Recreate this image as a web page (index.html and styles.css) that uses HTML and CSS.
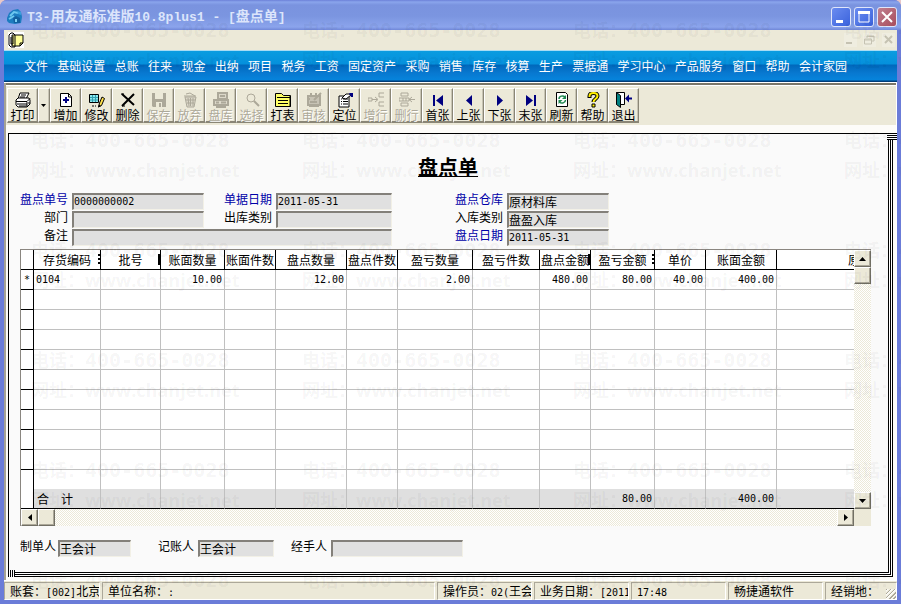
FILE: index.html
```
<!DOCTYPE html>
<html lang="zh-CN">
<head>
  <meta charset="UTF-8" />
  <meta name="viewport" content="width=device-width, initial-scale=1.0" />
  <title>T3-用友通标准版10.8plus1 - [盘点单]</title>
  <link rel="stylesheet" href="styles.css">
</head>
<body>
  <div class="window">
    <header class="titlebar">
      <svg class="app-icon" viewBox="0 0 17 17"><path d="M1 10l2-5 4-3 5-1 3 3 1 5-1 6-6 1-6-1-2-2z" fill="#1c7cc0"/><path d="M4 8l4-4 4 1M3 11l5-3" fill="none" stroke="#6cc8f0" stroke-width="2"/><path d="M11 3l4 1v3l-3-1z" fill="#3aa0dc"/><path d="M7 10l3-2 4 2v5H8z" fill="#1260a0"/><path d="M9 11h2v3H9z" fill="#7cd0f4"/></svg>
      <h1><span>T3-</span>用友通标准版<span>10.8plus1 - [</span>盘点单<span>]</span></h1>
      <div class="win-btns">
        <button class="win-btn" aria-label="最小化"><svg viewBox="0 0 18 18"><path d="M4 12h7v3H4z" fill="#fff"/></svg></button>
        <button class="win-btn" aria-label="最大化"><svg viewBox="0 0 18 18"><path d="M4 5h10v9H4z" fill="none" stroke="#fff"/><path d="M3 3h12v3H3z" fill="#fff"/></svg></button>
        <button class="win-btn close" aria-label="关闭"><svg viewBox="0 0 18 18"><path d="M4 4l10 10M14 4L4 14" stroke="#fff" stroke-width="2"/></svg></button>
      </div>
    </header>

    <div class="docbar">
      <svg class="doc-icon" viewBox="0 0 16 16"><path d="M0 0h16v16H0z" fill="#fff"/><path d="M4 3h11v8l-3 3H4z" fill="#ffff99" stroke="#000"/><path d="M15 11h-3v3" fill="none" stroke="#000"/><path d="M1 3v10l2 2h4V3L5 1H3L1 3M3 5v7h2V4" fill="none" stroke="#000"/></svg>
      <div class="doc-btns">
        <button aria-label="最小化子窗口"><svg viewBox="0 0 12 12"><path d="M2 8h6v2H2z" fill="#c5c2b2"/></svg></button>
        <button aria-label="还原子窗口"><svg viewBox="0 0 12 12"><path d="M4 4V2h7v5H9M4 2.500h7M1.500 5h7v5h-7zM1 6h8" fill="none" stroke="#c5c2b2"/></svg></button>
        <button aria-label="关闭子窗口"><svg viewBox="0 0 12 12"><path d="M3 2l7 7M10 2L3 9" stroke="#c5c2b2" stroke-width="2"/></svg></button>
      </div>
    </div>

    <nav class="menubar">
      <div class="menu">
        <a href="#">文件</a>
        <a href="#">基础设置</a>
        <a href="#">总账</a>
        <a href="#">往来</a>
        <a href="#">现金</a>
        <a href="#">出纳</a>
        <a href="#">项目</a>
        <a href="#">税务</a>
        <a href="#">工资</a>
        <a href="#">固定资产</a>
        <a href="#">采购</a>
        <a href="#">销售</a>
        <a href="#">库存</a>
        <a href="#">核算</a>
        <a href="#">生产</a>
        <a href="#">票据通</a>
        <a href="#">学习中心</a>
        <a href="#">产品服务</a>
        <a href="#">窗口</a>
        <a href="#">帮助</a>
        <a href="#">会计家园</a>
      </div>
    </nav>

    <main class="client">
      <div class="toolbar">
        <button><svg viewBox="0 0 16 16"><path d="M5 1h9l-3 6H3z" fill="#fff" stroke="#000"/><path d="M6 3h5M5 5h5" stroke="#000"/><path d="M1 8l2-2h11l1 2v4l-3 3H3l-2-2z" fill="#fff" stroke="#000"/><path d="M1 9.500h11l3-3M2 12h10M12 10v4M4 14h8M13 11h2" fill="none" stroke="#000"/></svg>打印</button>
        <button class="drop" aria-label="打印选项"><svg viewBox="0 0 6 4"><path d="M0 0h5L2.500 3z"/></svg></button>
        <button><svg viewBox="0 0 16 16"><path d="M2.500 1.500h8l3 3v10h-11z" fill="#fff" stroke="#000"/><path d="M10.500 1v4h3" fill="none" stroke="#000"/><path d="M8 5v6M5 8h6" stroke="#000080" stroke-width="2"/></svg>增加</button>
        <button><svg viewBox="0 0 16 16"><path d="M.5 2.500h9v8h-9z" fill="#8fe8ee" stroke="#000"/><path d="M1 5.500h8M1 8h8M3.500 3v7M6.500 3v7" stroke="#30a0b0"/><path d="M13 5l2.500 1.500-3 7-3 1.500 1-4z" fill="#ffe14a" stroke="#000"/><path d="M9 15.500l1-3 2 1.500z"/><path d="M3 14h2M6 14h1" stroke="#000"/></svg>修改</button>
        <button><svg viewBox="0 0 16 16"><path d="M2 2l12 11M14 2L2 14" stroke="#000" stroke-width="2"/><path d="M1 2h3M2 14h3" stroke="#000"/></svg>删除</button>
        <button disabled><svg viewBox="0 0 16 16"><path d="M1 1h14v14H2l-1-1z" fill="#aca899"/><path d="M4 1h8v6H4zM5 10h6v5H5z" fill="#ece9d8"/><path d="M8 11h2v4H8z" fill="#aca899"/></svg>保存</button>
        <button disabled><svg viewBox="0 0 16 16"><path d="M3 5h11l-2 10H5z" fill="#dcd8c9" stroke="#aca899"/><path d="M2 4h12M4 2l4-1 5 3M6 6l1 8M8.500 6v8M11 6v8M4 8h9M5 11h7" fill="none" stroke="#aca899"/></svg>放弃</button>
        <button disabled><svg viewBox="0 0 16 16"><path d="M5 1h9v6H5zM1 8h14v5H1z" fill="#dcd8c9" stroke="#aca899" stroke-width="2"/><path d="M7 4h5M3 10.500h3M8 10.500h5M3 15h10" stroke="#aca899" stroke-width="2"/></svg>盘库</button>
        <button disabled><svg viewBox="0 0 16 16"><circle cx="7" cy="6" r="4" fill="none" stroke="#aca899"/><path d="M10 9l5 5" stroke="#aca899" stroke-width="2"/></svg>选择</button>
        <button><svg viewBox="0 0 16 16"><path d="M.5 14.500v-13h6l2 2h7v11z" fill="#ffff66" stroke="#000"/><path d="M2 5.500h13M3 8.500h10M3 11.500h10M15 4v11" stroke="#000"/></svg>打表</button>
        <button disabled><svg viewBox="0 0 16 16"><path d="M2 4h12v9H2z" fill="#c7c3b5" stroke="#aca899" stroke-width="2"/><path d="M8 8l7-7M5 1v4M10 1v4M1 7h3M4 10h7M3 14h10" stroke="#aca899" stroke-width="2"/></svg>审核</button>
        <button><svg viewBox="0 0 16 16"><path d="M2 4h10v11H2z" fill="#fff" stroke="#000"/><path d="M4 7h1M6 7h5M4 9.500h1M6 9.500h5M4 12h1M6 12h5" stroke="#000"/><path d="M5 6l4-4h3l2 1-5 4z" fill="#fff" stroke="#000"/><path d="M12 1h4v4h-2z" fill="#000080"/></svg>定位</button>
        <button disabled><svg viewBox="0 0 16 16"><path d="M0 6h4v3H0zM4 7.500h5M7 5l3 2.500L7 10M16 1h-5v4h5M16 14h-5v-4h5" fill="none" stroke="#aca899"/></svg>增行</button>
        <button disabled><svg viewBox="0 0 16 16"><path d="M2 1h7v3H2zM2 11h7v3H2zM0 6h10v3H0zM10 7.500h6M13 5l-3 2.500 3 2.500M4 6v3M7 6v3" fill="none" stroke="#aca899"/></svg>删行</button>
        <button><svg viewBox="0 0 16 16"><path d="M3 3h2v11H3zM13 3v11L6 8.500z" fill="#000080"/></svg>首张</button>
        <button><svg viewBox="0 0 16 16"><path d="M11 3v11L5 8.500z" fill="#000080"/></svg>上张</button>
        <button><svg viewBox="0 0 16 16"><path d="M5 3v11l6-5.500z" fill="#000080"/></svg>下张</button>
        <button><svg viewBox="0 0 16 16"><path d="M3 3v11l7-5.500zM11 3h2v11h-2z" fill="#000080"/></svg>末张</button>
        <button><svg viewBox="0 0 16 16"><path d="M2.500.5h9l2 2v12h-11z" fill="#fff" stroke="#000"/><path d="M5 7c0-3 4-4 6-2M11.500 8c0 3-4 4-6 2" fill="none" stroke="#208850" stroke-width="1.500"/><path d="M12 3v4H8zM4.500 12V8h4z" fill="#208850"/></svg>刷新</button>
        <button><svg viewBox="0 0 16 16"><path d="M4.500 6V4c0-4 8-4 8 0 0 3-4 3-4 6" fill="none" stroke="#000" stroke-width="4"/><path d="M4.500 5V4c0-4 8-4 8 0 0 3-4 3-4 6" fill="none" stroke="#ffee00" stroke-width="2"/><path d="M7 12h3v3H7z" fill="#ffee00" stroke="#000"/></svg>帮助</button>
        <button><svg viewBox="0 0 16 16"><path d="M.5 12.500V.5h8v12H5" fill="#fff" stroke="#000"/><path d="M.5.5l4 3v12l-4-3z" fill="#008080" stroke="#000"/><path d="M9 6.500l4-4v3h3v2h-3v3z" fill="#000080"/></svg>退出</button>
      </div>

      <form class="sheet">
        <h2><span>盘点单</span></h2>

        <div class="fields">
          <label class="key" for="no">盘点单号</label>
          <input class="num" id="no" value="0000000002">
          <label class="key" for="date">单据日期</label>
          <input class="num" id="date" value="2011-05-31">
          <label class="key" for="store">盘点仓库</label>
          <input id="store" value="原材料库">
          <label for="dept">部门</label>
          <input id="dept">
          <label for="out-type">出库类别</label>
          <input id="out-type">
          <label for="in-type">入库类别</label>
          <input id="in-type" value="盘盈入库">
          <label for="memo">备注</label>
          <input class="memo" id="memo">
          <label class="key" for="count-date">盘点日期</label>
          <input class="num" id="count-date" value="2011-05-31">
        </div>

        <div class="grid-box">
          <table>
            <colgroup>
              <col class="w-mark"><col class="w-code"><col class="w-batch"><col class="w-amt"><col class="w-pcs"><col class="w-qty"><col class="w-pcs"><col class="w-wide"><col class="w-code"><col class="w-pcs"><col class="w-amt"><col class="w-pcs"><col class="w-qty"><col>
            </colgroup>
            <thead>
              <tr><th></th><th class="cut dots">存货编码</th><th class="cut">批号</th><th>账面数量</th><th>账面件数</th><th>盘点数量</th><th>盘点件数</th><th>盈亏数量</th><th>盈亏件数</th><th class="cut">盘点金额</th><th class="cut dots">盈亏金额</th><th>单价</th><th>账面金额</th><th class="last">原</th></tr>
            </thead>
            <tbody>
              <tr><td>*</td><td class="code">0104</td><td></td><td>10.00</td><td></td><td>12.00</td><td></td><td>2.00</td><td></td><td>480.00</td><td>80.00</td><td>40.00</td><td>400.00</td><td></td></tr>
              <tr><td></td><td></td><td></td><td></td><td></td><td></td><td></td><td></td><td></td><td></td><td></td><td></td><td></td><td></td></tr>
              <tr><td></td><td></td><td></td><td></td><td></td><td></td><td></td><td></td><td></td><td></td><td></td><td></td><td></td><td></td></tr>
              <tr><td></td><td></td><td></td><td></td><td></td><td></td><td></td><td></td><td></td><td></td><td></td><td></td><td></td><td></td></tr>
              <tr><td></td><td></td><td></td><td></td><td></td><td></td><td></td><td></td><td></td><td></td><td></td><td></td><td></td><td></td></tr>
              <tr><td></td><td></td><td></td><td></td><td></td><td></td><td></td><td></td><td></td><td></td><td></td><td></td><td></td><td></td></tr>
              <tr><td></td><td></td><td></td><td></td><td></td><td></td><td></td><td></td><td></td><td></td><td></td><td></td><td></td><td></td></tr>
              <tr><td></td><td></td><td></td><td></td><td></td><td></td><td></td><td></td><td></td><td></td><td></td><td></td><td></td><td></td></tr>
              <tr><td></td><td></td><td></td><td></td><td></td><td></td><td></td><td></td><td></td><td></td><td></td><td></td><td></td><td></td></tr>
              <tr><td></td><td></td><td></td><td></td><td></td><td></td><td></td><td></td><td></td><td></td><td></td><td></td><td></td><td></td></tr>
              <tr class="part"><td></td><td></td><td></td><td></td><td></td><td></td><td></td><td></td><td></td><td></td><td></td><td></td><td></td><td></td></tr>
            </tbody>
            <tfoot>
              <tr><td></td><td class="sum">合　计</td><td></td><td></td><td></td><td></td><td></td><td></td><td></td><td></td><td>80.00</td><td></td><td>400.00</td><td></td></tr>
            </tfoot>
          </table>
          <div class="vscroll">
            <button type="button" aria-label="向上"><svg viewBox="0 0 7 4"><path d="M0 4h7L3.500 0z"/></svg></button>
            <span class="thumb"></span>
            <button type="button" class="end" aria-label="向下"><svg viewBox="0 0 7 4"><path d="M0 0h7L3.500 4z"/></svg></button>
          </div>
          <div class="hscroll">
            <button type="button" aria-label="向左"><svg viewBox="0 0 4 7"><path d="M4 0v7L0 3.500z"/></svg></button>
            <span class="thumb"></span>
            <button type="button" class="end" aria-label="向右"><svg viewBox="0 0 4 7"><path d="M0 0v7l4-3.500z"/></svg></button>
          </div>
          <div class="corner"></div>
        </div>

        <div class="signers">
          <label for="maker">制单人</label>
          <input id="maker" value="王会计">
          <label for="booker">记账人</label>
          <input id="booker" value="王会计">
          <label for="handler">经手人</label>
          <input id="handler">
        </div>
      </form>
    </main>

    <footer class="statusbar">
      <div>账套：<span>[002]</span>北京</div>
      <div>单位名称：<span>:</span></div>
      <div>操作员：<span>02(</span>王会</div>
      <div>业务日期：<span>[2011</span></div>
      <div><span>17:48</span></div>
      <div>畅捷通软件</div>
      <div class="grip">经销地：</div>
    </footer>

    <div class="watermark" aria-hidden="true">
      <p>电话：<b>400-665-0028</b><br>网址：<i>www.chanjet.net</i></p>
      <p>电话：<b>400-665-0028</b><br>网址：<i>www.chanjet.net</i></p>
      <p>电话：<b>400-665-0028</b><br>网址：<i>www.chanjet.net</i></p>
      <p>电话：<b>400-665-0028</b><br>网址：<i>www.chanjet.net</i></p>
      <p>电话：<b>400-665-0028</b><br>网址：<i>www.chanjet.net</i></p>
      <p>电话：<b>400-665-0028</b><br>网址：<i>www.chanjet.net</i></p>
      <p>电话：<b>400-665-0028</b><br>网址：<i>www.chanjet.net</i></p>
      <p>电话：<b>400-665-0028</b><br>网址：<i>www.chanjet.net</i></p>
      <p>电话：<b>400-665-0028</b><br>网址：<i>www.chanjet.net</i></p>
      <p>电话：<b>400-665-0028</b><br>网址：<i>www.chanjet.net</i></p>
      <p>电话：<b>400-665-0028</b><br>网址：<i>www.chanjet.net</i></p>
      <p>电话：<b>400-665-0028</b><br>网址：<i>www.chanjet.net</i></p>
      <p>电话：<b>400-665-0028</b><br>网址：<i>www.chanjet.net</i></p>
      <p>电话：<b>400-665-0028</b><br>网址：<i>www.chanjet.net</i></p>
      <p>电话：<b>400-665-0028</b><br>网址：<i>www.chanjet.net</i></p>
      <p>电话：<b>400-665-0028</b><br>网址：<i>www.chanjet.net</i></p>
      <p>电话：<b>400-665-0028</b><br>网址：<i>www.chanjet.net</i></p>
      <p>电话：<b>400-665-0028</b><br>网址：<i>www.chanjet.net</i></p>
      <p>电话：<b>400-665-0028</b><br>网址：<i>www.chanjet.net</i></p>
      <p>电话：<b>400-665-0028</b><br>网址：<i>www.chanjet.net</i></p>
      <p>电话：<b>400-665-0028</b></p>
      <p>电话：<b>400-665-0028</b></p>
      <p>电话：<b>400-665-0028</b></p>
      <p>电话：<b>400-665-0028</b></p>
    </div>
  </div>
</body>
</html>
```

FILE: styles.css
```
* {
  box-sizing: border-box;
  margin: 0;
  padding: 0;
}

body {
  font-family: "Noto Sans CJK SC", sans-serif;
  font-size: 12px;
  line-height: 16px;
  color: #000;
  background: #e8c8c8;
}

button, input {
  font: inherit;
  color: inherit;
  border: none;
  border-radius: 0;
}

svg {
  display: block;
}

.window {
  position: relative;
  display: flex;
  flex-direction: column;
  min-height: 100vh;
  padding: 0 4px 4px;
  background: #6b7cd8;
  border-radius: 7px 7px 0 0;
  overflow: hidden;
}

/* title bar */
.titlebar {
  display: flex;
  align-items: center;
  height: 30px;
  margin: 0 -4px;
  padding: 3px 4px 0 6px;
  background: linear-gradient(to bottom, #6c80d8 0, #8aa5ec 2px, #7a93df 5px, #7b95e0 16px, #8ba4ec 27px, #7087d8 30px);
}

.app-icon {
  width: 17px;
  height: 17px;
}

.titlebar h1 {
  flex: 1;
  margin-left: 4px;
  font-size: 14px;
  font-weight: bold;
  line-height: 20px;
  color: #dce5fb;
  white-space: nowrap;
}

.titlebar h1 span {
  font-family: "Liberation Mono", monospace;
  font-size: 13px;
  white-space: pre;
}

.win-btns {
  display: flex;
  gap: 3px;
}

.win-btn {
  width: 20px;
  height: 20px;
  border: 1px solid #dfe6fb;
  border-radius: 3px;
  background: linear-gradient(135deg, #6a8cf0, #3a62dc);
}

.win-btn svg {
  width: 18px;
  height: 18px;
}

.win-btn.close {
  background: linear-gradient(135deg, #c08090, #a84c5c);
}

/* document row */
.docbar {
  display: flex;
  justify-content: space-between;
  align-items: center;
  height: 20px;
  padding: 0 2px 0 4px;
  background: #ece9d8;
}

.doc-icon {
  width: 16px;
  height: 16px;
}

.doc-btns {
  display: flex;
  gap: 6px;
}

.doc-btns button {
  width: 13px;
  height: 14px;
  background: #efede0;
}

.doc-btns svg {
  width: 12px;
  height: 12px;
}

/* menu */
.menubar {
  height: 33px;
  padding: 7px 20px 0;
  border-top: 1px solid #a8dcf4;
  border-bottom: 1px solid #fff;
  background: linear-gradient(to bottom, #0a9ce0 0, #0590dc 13px, #0068bc 14px, #0878d0 22px, #0684dc 29px, #003c78 30px, #003c78 31px);
}

.menu {
  display: flex;
  justify-content: space-between;
  max-width: 823px;
}

.menu a {
  color: #fff;
  text-decoration: none;
  white-space: nowrap;
}

.client {
  flex: 1;
  display: flex;
  flex-direction: column;
  border-left: 2px solid #a5a294;
  border-right: 1px solid #fff;
  background: #fdfcf9;
}

/* toolbar */
.toolbar {
  display: flex;
  height: 42px;
  padding: 3px 0 0 1px;
  border-top: 2px solid #7a7668;
  background: #ece9d8;
  box-shadow: inset 0 1px 0 #fff;
}

.toolbar button {
  width: 31px;
  height: 35px;
  padding: 2px 0 0;
  border: 1px solid;
  border-color: #fff #8a8676 #8a8676 #fff;
  border-bottom-width: 2px;
  background: #ece9d8;
  box-shadow: inset -1px 0 0 #c8c4b4;
  line-height: 13px;
  white-space: nowrap;
}

.toolbar svg {
  width: 16px;
  height: 16px;
  margin: 0 auto;
}

.toolbar button:disabled {
  color: #aca899;
  text-shadow: 1px 1px 0 #fff;
}

.toolbar .drop {
  width: 12px;
}

.toolbar .drop svg {
  width: 6px;
  height: 4px;
}

/* sheet */
.sheet {
  position: relative;
  flex: 1;
  margin: 8px 7px 7px 2px;
  padding: 20px 17px 15px 11px;
  border: 1px solid #000;
  background: #fafafa;
  box-shadow: 1px 1px 0 #fff, 2px 2px 0 #000, 3px 3px 0 #fff, 4px 4px 0 #000;
}

/* loose line ends at two corners of the frame */
.sheet::before,
.sheet::after {
  content: "";
  position: absolute;
}

.sheet::before {
  top: -1px;
  right: -9px;
  width: 10px;
  height: 7px;
  background: repeating-linear-gradient(to bottom, #000 0, #000 1px, #fff 1px, #fff 2px);
}

.sheet::after {
  left: -1px;
  bottom: -5px;
  width: 7px;
  height: 7px;
  background: repeating-linear-gradient(to right, #000 0, #000 1px, #fff 1px, #fff 2px);
}

.sheet h2 {
  padding-left: 5px;
  font-size: 20px;
  line-height: 26px;
  text-align: center;
}

.sheet h2 span {
  display: inline-block;
  height: 23px;
  border-bottom: 1px solid #000;
}

.fields {
  display: grid;
  grid-template-columns: 52px 132px 72px 116px 115px 102px;
  grid-auto-rows: 17px;
  row-gap: 1px;
  margin-top: 13px;
}

label {
  padding-right: 4px;
  line-height: 12px;
  text-align: right;
  white-space: nowrap;
}

label.key {
  color: #0000a8;
}

.sheet input {
  width: 100%;
  min-width: 0;
  height: 17px;
  padding: 0 0 2px;
  border: 1px solid;
  border-width: 2px 1px 1px 2px;
  border-color: #83807a #f2f0e6 #f2f0e6 #83807a;
  background: #e0e0e0;
}

.sheet .num {
  font-family: "DejaVu Sans Mono", monospace;
  font-size: 10px;
}

.fields .memo {
  grid-column: span 3;
}

/* detail grid */
.grid-box {
  display: grid;
  grid-template-columns: 1fr 17px;
  grid-template-rows: auto 17px;
  margin-top: 3px;
  border-top: 1px solid #8a8680;
  border-left: 1px solid #8a8680;
}

table {
  width: 100%;
  table-layout: fixed;
  border-collapse: separate;
  border-spacing: 0;
  background: #fff;
}

.w-mark { width: 13px; }
.w-code { width: 67px; }
.w-batch { width: 60px; }
.w-amt { width: 64px; }
.w-pcs { width: 51px; }
.w-qty { width: 71px; }
.w-wide { width: 75px; }

th, td {
  height: 20px;
  overflow: hidden;
  white-space: nowrap;
}

th {
  position: relative;
  font-weight: normal;
  line-height: 18px;
  border-right: 1px solid #000;
  border-bottom: 1px solid #000;
}

td {
  padding-right: 2px;
  border-right: 1px solid #c0c0c0;
  border-bottom: 1px solid #c0c0c0;
  font-family: "DejaVu Sans Mono", monospace;
  font-size: 10px;
  line-height: 19px;
  text-align: right;
}

td:first-child {
  padding: 0;
  border-color: #000;
  text-align: center;
}

th:last-child,
td:last-child {
  border-right: none;
}

td.code {
  padding-left: 2px;
  text-align: left;
}

th.last {
  padding-left: 71px;
  text-align: left;
}

/* sliver of the column title that does not fit */
th.cut::after {
  content: "";
  position: absolute;
  right: 0;
  top: 4px;
  width: 2px;
  height: 11px;
  background: #000;
}

th.dots::after {
  background: repeating-linear-gradient(to bottom, #000 0, #000 2px, #fff 2px, #fff 4px);
}

.part td {
  height: 19px;
  border-bottom: none;
}

tfoot td {
  border-bottom-color: #000;
  background: #dfdfdf;
}

tfoot td:first-child {
  background: #fff;
}

td.sum {
  padding-left: 3px;
  font-family: "Noto Sans CJK SC", sans-serif;
  font-size: 12px;
  text-align: left;
}

.vscroll, .hscroll {
  display: flex;
  background: repeating-conic-gradient(#fff 0 25%, #ece9d8 0 50%) 0 0 / 2px 2px;
}

.vscroll {
  flex-direction: column;
}

.vscroll button, .hscroll button, .thumb {
  display: flex;
  align-items: center;
  justify-content: center;
  width: 17px;
  height: 17px;
  border: 1px solid;
  border-color: #fff #716f64 #716f64 #fff;
  box-shadow: inset -1px -1px 0 #aca899;
  background: #ece9d8;
}

.vscroll svg { width: 7px; height: 4px; }
.hscroll svg { width: 4px; height: 7px; }

.vscroll .end { margin-top: auto; }
.hscroll .end { margin-left: auto; }

.corner {
  background: #ece9d8;
}

.signers {
  display: grid;
  grid-template-columns: 38px 73px 67px 76px 57px 132px;
  margin-top: 14px;
}

/* status bar */
.statusbar {
  display: grid;
  grid-template-columns: 96px 1fr 95px 95px 95px 95px 72px;
  gap: 2px;
  height: 20px;
  padding-top: 1px;
  border-top: 1px solid #fff;
  background: #ece9d8;
}

.statusbar div {
  padding-left: 5px;
  border: 1px solid;
  border-color: #aca899 #fff #fff #aca899;
  line-height: 15px;
  overflow: hidden;
  white-space: nowrap;
}

.statusbar span {
  font-family: "DejaVu Sans Mono", monospace;
  font-size: 10px;
}

.statusbar .grip {
  background: repeating-linear-gradient(135deg, #aca899 0, #aca899 1px, #fff 1px, #ece9d8 3px) right bottom / 10px 10px no-repeat;
}

/* watermark over the whole window */
.watermark {
  position: absolute;
  inset: 0;
  display: grid;
  grid-template-columns: repeat(4, 271px);
  grid-auto-rows: 110px;
  padding: 15px 0 0 31px;
  overflow: hidden;
  pointer-events: none;
  font-size: 18px;
  font-weight: bold;
  line-height: 29px;
  color: rgba(0, 0, 0, 0.05);
  white-space: nowrap;
}

.watermark b {
  font-family: "DejaVu Sans Mono", monospace;
  font-size: 20px;
}

.watermark i {
  font-family: "Open Sans", sans-serif;
  font-size: 18px;
  font-style: normal;
}
```
